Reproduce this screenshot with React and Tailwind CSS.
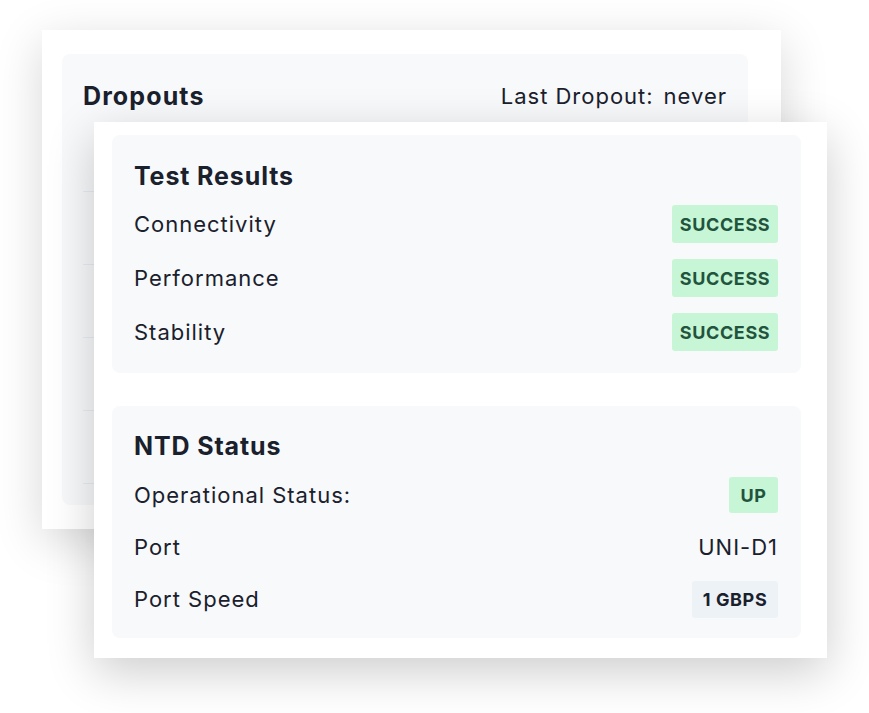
import React from "react";

const testResults = [
  { label: "Connectivity", status: "SUCCESS" },
  { label: "Performance", status: "SUCCESS" },
  { label: "Stability", status: "SUCCESS" },
];

const Badge = ({ children, tone = "green" }) => (
  <span
    className={`inline-flex items-center justify-center rounded-[3px] font-bold text-[18px] tracking-[0.035em] ${
      tone === "green"
        ? "bg-[#c6f6d5] text-[#22543d]"
        : "bg-[#edf2f7] text-[#1a202c]"
    }`}
  >
    {children}
  </span>
);

export default function App() {
  return (
    <div
      className="w-[869px] h-[713px] bg-white overflow-hidden pt-[30px] pl-[42px] text-[#1a202c]"
      style={{ fontFamily: "Inter, 'Noto Sans', sans-serif" }}
    >
      {/* Dropouts card (behind) */}
      <div className="w-[739px] h-[499px] bg-white pt-[24px] pl-[20px] pr-[33px] shadow-[0_12px_45px_rgba(0,0,0,0.16)]">
        <div className="h-[451px] rounded-lg bg-[#f7f9fb] px-[21px] pt-[26px]">
          <div className="flex items-center justify-between h-[32px]">
            <h2 className="text-[25px] leading-[32px] font-bold tracking-[0.045em]">Dropouts</h2>
            <div className="flex gap-[10px] text-[22px] leading-[32px] tracking-[0.045em]">
              <span>Last Dropout:</span>
              <span>never</span>
            </div>
          </div>
          <div className="mt-[7px]">
            {[0, 1, 2, 3, 4].map((i) => (
              <div key={i} className="h-[73px] border-b border-[#e8edf3]" />
            ))}
          </div>
        </div>
      </div>

      {/* Front card */}
      <div className="relative ml-[52px] -mt-[407px] w-[733px] h-[536px] bg-white pt-[13px] pl-[18px] pr-[26px] shadow-[0_14px_45px_rgba(0,0,0,0.2)]">
        <div className="h-[238px] rounded-lg bg-[#f7f9fb] pl-[22px] pr-[23px] pt-[25px]">
          <h2 className="text-[25px] leading-[32px] font-bold tracking-[0.035em]">Test Results</h2>
          <div className="mt-[5px]">
            {testResults.map((r) => (
              <div key={r.label} className="flex items-center justify-between h-[54px]">
                <span className="text-[22px] tracking-[0.045em]">{r.label}</span>
                <Badge>
                  <span className="w-[106px] h-[38px] pt-[1px] flex items-center justify-center">{r.status}</span>
                </Badge>
              </div>
            ))}
          </div>
        </div>

        <div className="mt-[33px] h-[232px] rounded-lg bg-[#f7f9fb] pl-[22px] pr-[23px] pt-[24px]">
          <h2 className="text-[25px] leading-[32px] font-bold tracking-[0.035em]">NTD Status</h2>
          <div className="mt-[7px]">
            <div className="flex items-center justify-between h-[52px]">
              <span className="text-[22px] tracking-[0.045em]">Operational Status:</span>
              <Badge>
                <span className="w-[49px] h-[36px] pt-[1px] flex items-center justify-center">UP</span>
              </Badge>
            </div>
            <div className="flex items-center justify-between h-[52px]">
              <span className="text-[22px] tracking-[0.045em]">Port</span>
              <span className="text-[22px] tracking-[0.045em]">UNI-D1</span>
            </div>
            <div className="flex items-center justify-between h-[52px]">
              <span className="text-[22px] tracking-[0.045em]">Port Speed</span>
              <Badge tone="gray">
                <span className="w-[86px] h-[37px] pt-[1px] flex items-center justify-center">1 GBPS</span>
              </Badge>
            </div>
          </div>
        </div>
      </div>
    </div>
  );
}
